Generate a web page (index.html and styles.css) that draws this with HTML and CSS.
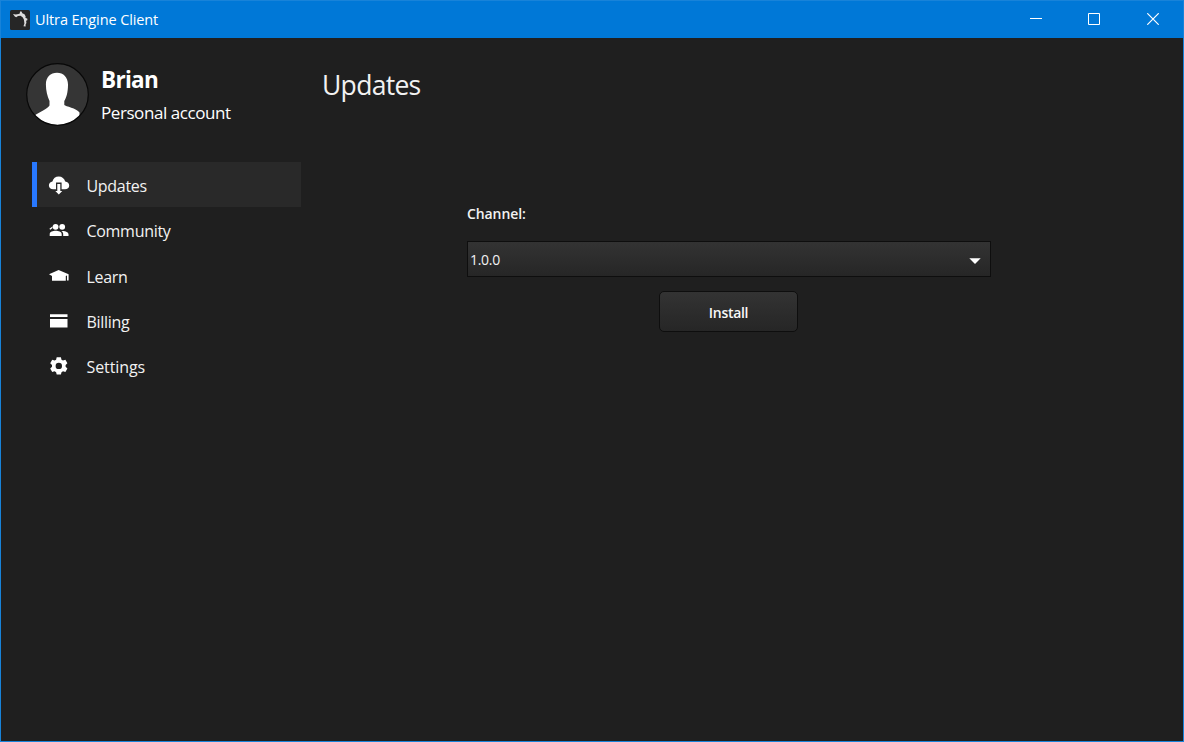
FILE: index.html
```html
<!DOCTYPE html>
<html lang="en">
<head>
<meta charset="utf-8">
<title>Ultra Engine Client</title>
<link rel="stylesheet" href="styles.css">
</head>
<body>
<div class="window">
  <header class="titlebar">
    <svg class="app-icon" viewBox="0 0 20 20">
      <rect width="20" height="20" rx="1.500" fill="#262626"/>
      <path d="M3 3.900 5.800 4.600 8.500 4 9.800 3.400 10 1.600 11.500 1.500 12.300 3.200 14.500 4.200 15.700 6.500 15.400 7.800 17.400 8.800 17.300 10.300 16.100 10.800 16.400 13 15.600 14.500 15.600 16.600 13.500 16.300 14.400 13.500 13.900 9.500 12.600 7.200 10.500 5.800 8 6.100 6.200 7.300 4.800 6.500Z" fill="#dcdcdc"/>
    </svg>
    <span class="caption">Ultra Engine Client</span>
    <div class="controls">
      <svg class="control" viewBox="0 0 12 12"><path d="M0 5.500H12"/></svg>
      <svg class="control" viewBox="0 0 12 12"><path d="M.5.5h11v11H.5z"/></svg>
      <svg class="control close" viewBox="0 0 12 12"><path d="M.3.3 11.700 11.700M11.700.3.3 11.700"/></svg>
    </div>
  </header>
  <div class="body">
    <aside class="sidebar">
      <div class="profile">
        <svg class="avatar" viewBox="0 0 64 64">
          <defs><clipPath id="disc"><circle cx="31.500" cy="31.500" r="30.600"/></clipPath></defs>
          <circle cx="31.500" cy="31.500" r="30.800" fill="#353535"/>
          <path clip-path="url(#disc)" d="M31 9.800C37.500 9.800 42 14.500 42 21.500 42 29.500 40.300 35 38.300 38V42C39.500 43.500 50.500 45 53.500 49.500V64H8.500V52.500C13.500 49 21.500 46 23.500 42.500V38C21.300 33.500 19.900 27.500 19.900 21.500 19.900 14 24.500 9.800 31 9.800Z" fill="#fff"/>
          <circle cx="31.500" cy="31.500" r="30.800" fill="none" stroke="#080808" stroke-width="1.200"/>
        </svg>
        <div class="identity">
          <div class="name">Brian</div>
          <div class="account">Personal account</div>
        </div>
      </div>
      <nav class="nav">
        <a class="item active">
          <svg class="icon" viewBox="0 0 22 22"><path d="M5.300 15.300C2.700 15.300.9 13.700.9 11.400.9 9.200 2.500 7.800 4.400 7.500 5.100 4.400 7.600 2.500 10.700 2.500c3.300 0 5.800 2 6.500 5.100 2.400.3 4 1.900 4 4.100 0 2.200-1.800 3.600-4.200 3.600Z"/><path class="cut" d="M8 8.500H13.600V19H8Z"/><path d="M9.300 10H12.300V17H14.300L10.800 20.500 7.300 17H9.300Z"/></svg>
          <span>Updates</span>
        </a>
        <a class="item">
          <svg class="icon" viewBox="0 0 22 22"><circle cx="7.600" cy="7.800" r="2.900"/><circle cx="14.200" cy="7.800" r="2.900"/><path d="M1.700 17V15.200C1.700 12.800 5 11.800 7.700 11.800s6 1 6 3.400V17ZM15.200 17V15.300C15.200 13.800 14.400 12.700 13.300 12 16.500 11.500 20.500 12.800 20.500 15.200V17ZM1.400 9.800 4.400 7.400 4.600 9 2.200 10.800Z"/></svg>
          <span>Community</span>
        </a>
        <a class="item">
          <svg class="icon" viewBox="0 0 22 22"><path d="M1 9.200 10.600 5 20.600 9.200V15.400H19V10.500L17.800 11V15.700H4V11Z"/></svg>
          <span>Learn</span>
        </a>
        <a class="item">
          <svg class="icon" viewBox="0 0 22 22"><path d="M2 4.200H19.500V6.900H2ZM2 9H19.500V17.400H2Z"/></svg>
          <span>Billing</span>
        </a>
        <a class="item settings">
          <svg class="icon" viewBox="0 0 22 22"><path fill-rule="evenodd" d="M8.700 2.300h4.200l.6 2.400 1.500.9 2.400-.8 2 3.500-1.800 1.700v1.800l1.800 1.700-2 3.500-2.400-.7-1.500.9-.6 2.400H8.700l-.6-2.400-1.500-.9-2.400.7-2-3.500L4 11.800V10L2.200 8.300l2-3.500 2.400.8 1.500-.9ZM10.800 7.700a3.200 3.200 0 1 0 0 6.400 3.200 3.200 0 0 0 0-6.400Z"/></svg>
          <span>Settings</span>
        </a>
      </nav>
    </aside>
    <main class="main">
      <h1 class="title">Updates</h1>
      <section class="form">
        <label class="label">Channel:</label>
        <div class="select"><span>1.0.0</span><svg class="arrow" viewBox="0 0 12 6"><path d="M.3.2H11.700L6 6Z"/></svg></div>
        <button class="install">Install</button>
      </section>
    </main>
  </div>
</div>
</body>
</html>
```
FILE: styles.css
```css
* { box-sizing: border-box; }
body { margin: 0; background: #1f1f1f; color: #f2f2f2; font-family: "Open Sans", "Noto Sans", sans-serif; }
.window { width: 1184px; height: 742px; border: 1px solid #1883d9; background: #1f1f1f; overflow: hidden; }
.titlebar { height: 37px; display: flex; align-items: center; padding: 0 24px 0 9px; background: #0078d7; }
.app-icon { width: 20px; height: 20px; margin-right: 5px; }
.caption { font-size: 14.5px; letter-spacing: -.1px; color: #fff; line-height: 20px; }
.controls { margin-left: auto; display: flex; gap: 46px; }
.control { width: 12px; height: 12px; margin-top: -1px; fill: none; stroke: #fff; stroke-width: 1; }
.control.close { margin-left: 1px; stroke-width: 1.2; }
.body { display: flex; }
.sidebar { width: 300px; padding-top: 24px; }
.profile { display: flex; padding-left: 25px; height: 100px; }
.avatar { width: 64px; height: 64px; margin-top: 1px; }
.identity { padding: 2px 0 0 11px; white-space: nowrap; }
.name { font-size: 22.5px; font-weight: 700; line-height: 32px; letter-spacing: -.7px; color: #fff; }
.account { font-size: 17px; line-height: 24px; margin-top: 5px; letter-spacing: -.43px; color: #fff; }
.nav { margin-left: 30.5px; }
.item { display: flex; align-items: center; height: 45.3px; padding-left: 11.5px; border-left: 5px solid transparent; font-size: 16px; letter-spacing: -.3px; line-height: 24px; }
.item.active { background: #292929; border-left-color: #2878ff; }
.item.settings { letter-spacing: -.1px; }
.item span { padding-top: 3px; }
.icon { width: 22px; height: 22px; margin: 1px 16.5px 0 0; fill: #fff; flex: none; }
.cut { fill: #292929; }
.main { flex: 1; padding-top: 28px; }
.title { margin: 0 0 0 21px; font-size: 26.5px; font-weight: 400; line-height: 38px; letter-spacing: -.7px; }
.form { width: 524px; margin: 99px 0 0 166px; display: flex; flex-direction: column; }
.label { font-size: 14px; font-weight: 600; line-height: 22px; letter-spacing: -.1px; margin-bottom: 16px; }
.select { height: 36px; display: flex; align-items: center; justify-content: space-between; padding: 0 9px 0 2px; border: 1px solid #0e0e0e; background: linear-gradient(#333, #262626); font-size: 14px; letter-spacing: -.3px; }
.arrow { width: 12px; height: 6px; margin-top: 3px; fill: #fff; }
.install { width: 139px; height: 41px; margin: 14px auto 0 192px; padding: 2px 0 0; border: 1px solid #0e0e0e; border-radius: 5px; background: linear-gradient(#333, #262626); color: #f8f8f8; font: 600 14px "Open Sans", "Noto Sans", sans-serif; letter-spacing: -.3px; }
```
